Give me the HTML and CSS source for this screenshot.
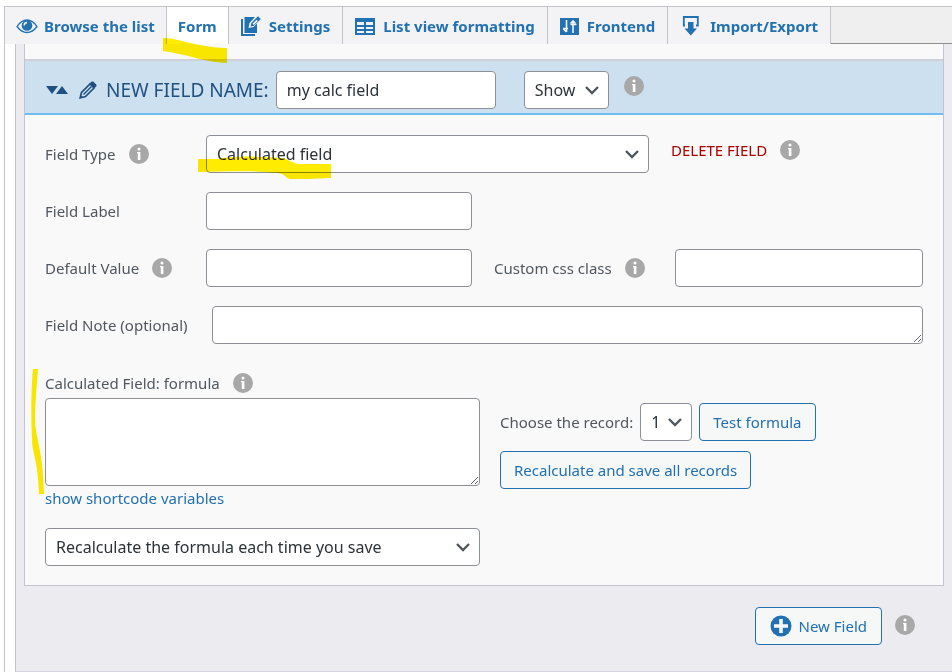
FILE: index.html
```html
<!DOCTYPE html>
<html lang="en">
<head>
<meta charset="utf-8">
<meta name="viewport" content="width=device-width, initial-scale=1">
<title>Form fields</title>
<link rel="stylesheet" href="styles.css">
</head>
<body>
<svg class="defs" width="0" height="0" aria-hidden="true">
  <symbol id="info" viewBox="0 0 20 20">
    <circle cx="10" cy="10" r="10" fill="#a8a8a8"/>
    <circle cx="10" cy="5" r="1.500" fill="#fff"/>
    <path d="M8 8h3.400v8H8.800V9.200H8z" fill="#fff"/>
  </symbol>
  <symbol id="chevron" viewBox="0 0 16 10">
    <path d="M2 2l6 6 6-6" fill="none" stroke="#50575e" stroke-width="2.400"/>
  </symbol>
</svg>
<div class="page">
  <nav class="tabs">
    <a class="tab" href="#browse">
      <svg width="22" height="16" viewBox="0 0 22 16"><path d="M1 8.500C4 4 7.500 2 11 2s7 2 10 6.500C18 12.500 14.500 14.500 11 14.500S4 12.500 1 8.500z" fill="none" stroke="currentColor" stroke-width="1.300"/><circle cx="11" cy="7.500" r="5.300" fill="currentColor"/><path d="M8.200 7.500a3 3 0 0 1 2.800-3" fill="none" stroke="#f3f3f6" stroke-width="1.500"/></svg>
      Browse the list</a>
    <a class="tab active" href="#form">Form
      <svg class="mark mark-tab" width="64" height="26" viewBox="0 0 64 26"><path d="M0 1C12 1 24 6 37 8c10 2 18 3 27 3v15C44 26 24 17 0 14z" fill="#ffec00"/></svg></a>
    <a class="tab roomy" href="#settings">
      <svg width="20" height="20" viewBox="0 0 20 20"><path d="M0 3h2v15h12v2H0z" fill="currentColor"/><path d="M3.500 1H14L8.500 7 7.500 12l5-1L16 7.500V17H3.500z" fill="currentColor"/><path d="M9.500 10.500l.8-3.500L17 .3 19.800 3 13 9.700z" fill="currentColor"/><path d="M11.500 7.700l4-4 1.300 1.300-4 4z" fill="#f3f3f6"/></svg>
      Settings</a>
    <a class="tab roomy" href="#list">
      <svg width="20" height="18" viewBox="0 0 20 18"><path fill-rule="evenodd" d="M0 1h20v17H0zM2 5v3h7V5zm9 0v3h7V5zM2 10v2h7v-2zm9 0v2h7v-2zM2 14v2h7v-2zm9 0v2h7v-2z" fill="currentColor"/></svg>
      List view formatting</a>
    <a class="tab roomy" href="#frontend">
      <svg width="19" height="18" viewBox="0 0 19 18"><path d="M0 1h19v17H0z" fill="currentColor"/><path d="M6.500 3v12M3 11.500h5M3.500 12l3 3M13 4v12M10.500 7.500h6M10.500 6.500L13 4l2.500 2.500" fill="none" stroke="#f3f3f6" stroke-width="1.600"/></svg>
      Frontend</a>
    <a class="tab roomy" href="#import">
      <svg class="wide" width="20" height="20" viewBox="0 0 20 20"><path d="M4 9.500H2.800V1h14v8.500H15" fill="none" stroke="currentColor" stroke-width="1.800"/><path d="M7 6h5.500v6.500H16L9.800 19.500 3.500 12.500H7z" fill="currentColor"/></svg>
      Import/Export</a>
    <span class="tabs-rest"></span>
  </nav>
  <main class="panel">
    <div class="inner">
      <section class="card">
        <header class="card-head">
          <svg width="22" height="10" viewBox="0 0 22 10"><path d="M0 1h12L6 9zM10 9l6-8 6 8z" fill="currentColor"/></svg>
          <svg class="pencil" width="18" height="18" viewBox="0 0 18 18"><path d="M1.200 16.800l1.300-5.300L11 3l4 4-8.500 8.500z" fill="none" stroke="currentColor" stroke-width="1.700"/><path d="M4.500 13.500l8-8" stroke="currentColor" stroke-width="1.500"/><path d="M10.500 2.500L12.700.5h1.500l3.300 3.300v1.200l-2 2.200zM1 17l.6-3 2.400 2.400z" fill="currentColor"/></svg>
          <label class="card-title" for="name">NEW FIELD NAME:</label>
          <input class="control name" id="name" type="text" value="my calc field">
          <span class="select show"><select class="control" aria-label="Visibility"><option>Show</option></select><svg class="chevron"><use href="#chevron"/></svg></span>
          <svg class="info raised"><use href="#info"/></svg>
        </header>
        <form class="fields">
          <div class="row">
            <div class="caption"><label for="type">Field Type</label><svg class="info"><use href="#info"/></svg></div>
            <span class="select type"><select class="control" id="type"><option>Calculated field</option></select><svg class="chevron"><use href="#chevron"/></svg>
              <svg class="mark mark-type" width="133" height="23" viewBox="0 0 133 23"><path d="M0 3h20c14-3 40-3 64-1 6 1 8 4 16 6h33v14c-16 1-30 1-41 1-5-1-4-5-13-6-24-3-50-1-79-1z" fill="#ffec00"/></svg></span>
            <div class="delete"><a href="#delete">DELETE FIELD</a><svg class="info"><use href="#info"/></svg></div>
          </div>
          <div class="row">
            <div class="caption"><label for="label">Field Label</label></div>
            <input class="control medium" id="label" type="text">
          </div>
          <div class="row">
            <div class="caption"><label for="default">Default Value</label><svg class="info"><use href="#info"/></svg></div>
            <input class="control medium" id="default" type="text">
            <div class="caption css"><label for="css">Custom css class</label><svg class="info"><use href="#info"/></svg></div>
            <input class="control grow" id="css" type="text">
          </div>
          <div class="row">
            <div class="caption note"><label for="note">Field Note (optional)</label></div>
            <textarea class="control grow" id="note"></textarea>
          </div>
          <div class="formula">
            <div class="formula-main">
              <div class="caption"><label for="formula">Calculated Field: formula</label><svg class="info"><use href="#info"/></svg></div>
              <textarea class="control code" id="formula"></textarea>
              <a class="vars" href="#vars">show shortcode variables</a>
              <span class="select"><select class="control" aria-label="Recalculation"><option>Recalculate the formula each time you save</option></select><svg class="chevron"><use href="#chevron"/></svg></span>
              <svg class="mark mark-side" width="14" height="126" viewBox="0 0 14 126"><path d="M2 0h5C5 25 3 49 5 61c2 14 7 26 8 64H8C7 89 1 86 1 69 0 48 0 20 2 0z" fill="#ffec00"/></svg>
            </div>
            <div class="formula-side">
              <div class="line">
                <label for="record">Choose the record:</label>
                <span class="select record"><select class="control" id="record"><option>1</option></select><svg class="chevron"><use href="#chevron"/></svg></span>
                <button class="button" type="button">Test formula</button>
              </div>
              <button class="button" type="button">Recalculate and save all records</button>
            </div>
          </div>
        </form>
      </section>
      <footer class="actions">
        <button class="button new" type="button"><svg width="22" height="22" viewBox="0 0 22 22"><circle cx="11" cy="11" r="10.500" fill="currentColor"/><path d="M11 4v14M4 11h14" stroke="#f6f7f7" stroke-width="3.600"/></svg>New Field</button>
        <svg class="info raised"><use href="#info"/></svg>
      </footer>
    </div>
  </main>
</div>
</body>
</html>
```
FILE: styles.css
```css
* { box-sizing: border-box; }
body {
  margin: 0;
  background: #fff;
  color: #50575e;
  font: 15px/20px "Noto Sans", "Open Sans", sans-serif;
}
a { color: #2271b1; text-decoration: none; }
svg { flex: none; display: block; }
.defs { position: absolute; }
.page { padding: 6px 0 0 4px; }

.tabs { display: flex; border-top: 1px solid #c3c4c7; border-left: 1px solid #c3c4c7; }
.tab {
  position: relative;
  display: flex;
  align-items: center;
  gap: 6px;
  height: 37px;
  padding: 0 11px;
  border-right: 1px solid #c3c4c7;
  background: #f3f3f6;
  font-weight: 700;
  white-space: nowrap;
}
.tab.active { background: #fff; }
.tab.roomy { gap: 8px; padding: 0 12px; }
.tab .wide { margin: 0 1px; }
.tabs-rest { flex: 1; background: #efeff0; border-bottom: 1px solid #8f8f8f; }

.panel { border-left: 1px solid #c3c4c7; padding-left: 10px; }
.inner {
  min-height: 628px;
  padding: 0 8px;
  border-left: 1px solid #c1c1d2;
  border-bottom: 1px solid #d5d5e0;
  background: #ecebf0;
}
.card {
  padding-top: 15px;
  border: solid #c3c3d3;
  border-width: 0 1px 1px;
  background: #f9f9f9;
}
.card-head {
  display: flex;
  align-items: center;
  height: 56px;
  padding: 6px 20px 0 21px;
  border-top: 2px solid #d0d0da;
  border-bottom: 2px solid #6ebcf2;
  background: #cde0ef;
  color: #1f5080;
}
.pencil { margin: 0 9px 0 11px; }
.card-title { font-size: 19px; }
.raised { align-self: flex-start; margin-top: 9px; }

.control {
  width: 100%;
  height: 38px;
  padding: 0 10px;
  border: 1px solid #8c8f94;
  border-radius: 4px;
  background: #fff;
  color: #2c3338;
  font: 16px/24px "Noto Sans", "Open Sans", sans-serif;
}
select.control { appearance: none; }
textarea.control { display: block; }
.select { position: relative; display: block; }
.chevron { position: absolute; right: 9px; top: 14px; width: 16px; height: 10px; pointer-events: none; }
.name { width: 220px; margin: 0 28px 0 7px; }
.show { width: 85px; margin-right: 15px; }
.info { width: 20px; height: 20px; }

.fields { display: flex; flex-direction: column; gap: 19px; padding: 20px 20px 19px; }
.row { display: flex; align-items: center; }
.caption { display: flex; align-items: center; gap: 13px; width: 161px; white-space: nowrap; }
.type { width: 443px; }
.medium { width: 266px; }
.css { width: 181px; margin-left: 22px; }
.note { width: 167px; }
.grow { flex: 1; min-width: 0; }
.delete { display: flex; align-items: center; gap: 13px; margin: 0 0 8px 22px; }
.delete a { color: #a00; }

.formula { display: flex; gap: 20px; }
.formula-main { position: relative; width: 435px; }
.formula-main .caption { margin: 10px 0 5px; }
.code { height: 88px; }
.vars { display: block; margin: 2px 0 20px; }
.formula-side { padding-top: 40px; }
.line { display: flex; align-items: center; gap: 7px; margin-bottom: 10px; white-space: nowrap; }
.record { width: 52px; }
.button {
  height: 38px;
  padding: 0 13px;
  border: 1px solid #2271b1;
  border-radius: 4px;
  background: #f6f7f7;
  color: #2271b1;
  font: 15px/20px "Noto Sans", "Open Sans", sans-serif;
}
.actions { display: flex; justify-content: flex-end; gap: 13px; padding: 21px 29px 0; }
.actions .raised { margin-top: 8px; }
.new { display: flex; align-items: center; gap: 7px; padding: 0 14px; }

.mark { position: absolute; mix-blend-mode: multiply; pointer-events: none; z-index: 1; }
.mark-tab { left: -4px; top: 30px; }
.mark-type { left: -8px; top: 21px; }
.mark-side { left: -14px; top: 6px; }
```
